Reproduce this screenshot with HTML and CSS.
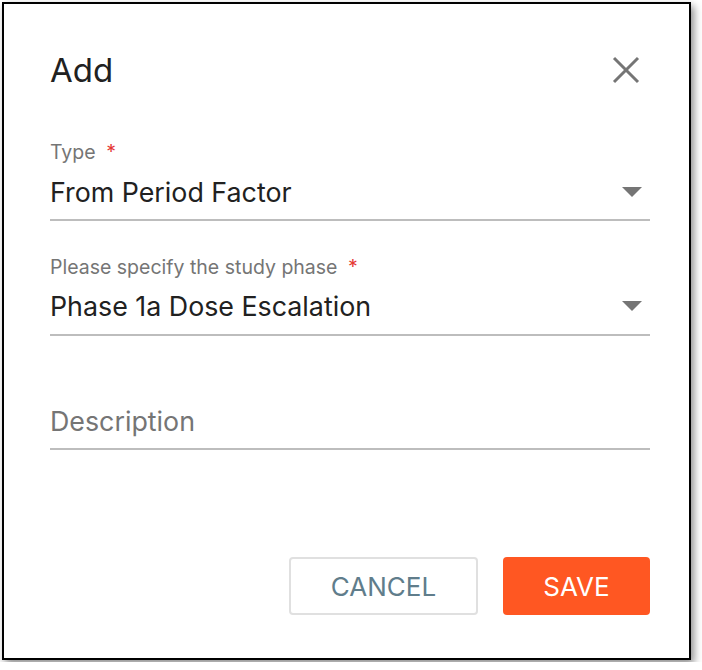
FILE: index.html
```html
<!DOCTYPE html>
<html lang="en">
<head>
    <meta charset="UTF-8">
    <meta name="viewport" content="width=device-width, initial-scale=1.0">
    <title>Add</title>
    <link rel="stylesheet" href="styles.css">
</head>
<body>
    <div class="dialog">
        <div class="dialog-header">
            <h2 class="dialog-title">Add</h2>
            <button class="close-btn" aria-label="Close">
                <svg width="28" height="28" viewBox="0 0 28 28">
                    <line x1="2" y1="2" x2="26" y2="26" />
                    <line x1="26" y1="2" x2="2" y2="26" />
                </svg>
            </button>
        </div>

        <div class="field">
            <div class="field-label">Type <span class="required">*</span></div>
            <div class="field-input">
                <span class="field-value">From Period Factor</span>
                <svg class="arrow" width="20" height="10" viewBox="0 0 20 10"><polygon points="0,0 20,0 10,10" /></svg>
            </div>
        </div>

        <div class="field">
            <div class="field-label">Please specify the study phase <span class="required">*</span></div>
            <div class="field-input">
                <span class="field-value">Phase 1a Dose Escalation</span>
                <svg class="arrow" width="20" height="10" viewBox="0 0 20 10"><polygon points="0,0 20,0 10,10" /></svg>
            </div>
        </div>

        <div class="field field-plain">
            <div class="field-input">
                <span class="field-value placeholder">Description</span>
            </div>
        </div>

        <div class="dialog-actions">
            <button class="btn btn-cancel">CANCEL</button>
            <button class="btn btn-save">SAVE</button>
        </div>
    </div>
</body>
</html>
```

FILE: styles.css
```css
body {
    margin: 0;
    background: #fff;
    font-family: Inter, Roboto, "Liberation Sans", Arial, sans-serif;
}
.dialog {
    margin: 2px;
    width: 689px;
    height: 658px;
    box-sizing: border-box;
    border: 2px solid #000;
    background: #fff;
    box-shadow: 3px 4px 8px rgba(0,0,0,0.45);
    padding: 46px 39px 43px 46px;
    display: flex;
    flex-direction: column;
}
.dialog-header {
    display: flex;
    align-items: center;
    justify-content: space-between;
}
.dialog-title {
    margin: 0;
    font-size: 33px;
    font-weight: 400;
    line-height: 40px;
    color: #212121;
}
.close-btn {
    border: none;
    background: none;
    padding: 0;
    margin-right: 10px;
    display: flex;
}
.close-btn line {
    stroke: #757575;
    stroke-width: 3;
}
.field {
    margin-top: 34.5px;
    border-bottom: 2px solid #bdbdbd;
    padding-bottom: 11.5px;
}
.dialog-header + .field {
    margin-top: 51px;
}
.field-plain {
    padding-top: 34.5px;
}
.field-label {
    font-size: 19.5px;
    line-height: 22px;
    color: #757575;
    margin-bottom: 12.5px;
}
.required {
    color: #e53935;
    margin-left: 5px;
}
.field-input {
    display: flex;
    align-items: center;
    justify-content: space-between;
}
.field-value {
    font-size: 26.8px;
    line-height: 32px;
    color: #212121;
}
.placeholder {
    color: #757575;
}
.arrow {
    margin-right: 8px;
    fill: #757575;
}
.dialog-actions {
    margin-top: auto;
    display: flex;
    justify-content: flex-end;
    gap: 25px;
}
.btn {
    height: 58px;
    font-family: inherit;
    font-size: 26px;
    border-radius: 4px;
    cursor: pointer;
}
.btn-cancel {
    width: 189px;
    background: #fff;
    border: 2px solid #e0e0e0;
    color: #607d8b;
}
.btn-save {
    width: 147px;
    background: #ff5722;
    border: none;
    color: #fff;
}
```
